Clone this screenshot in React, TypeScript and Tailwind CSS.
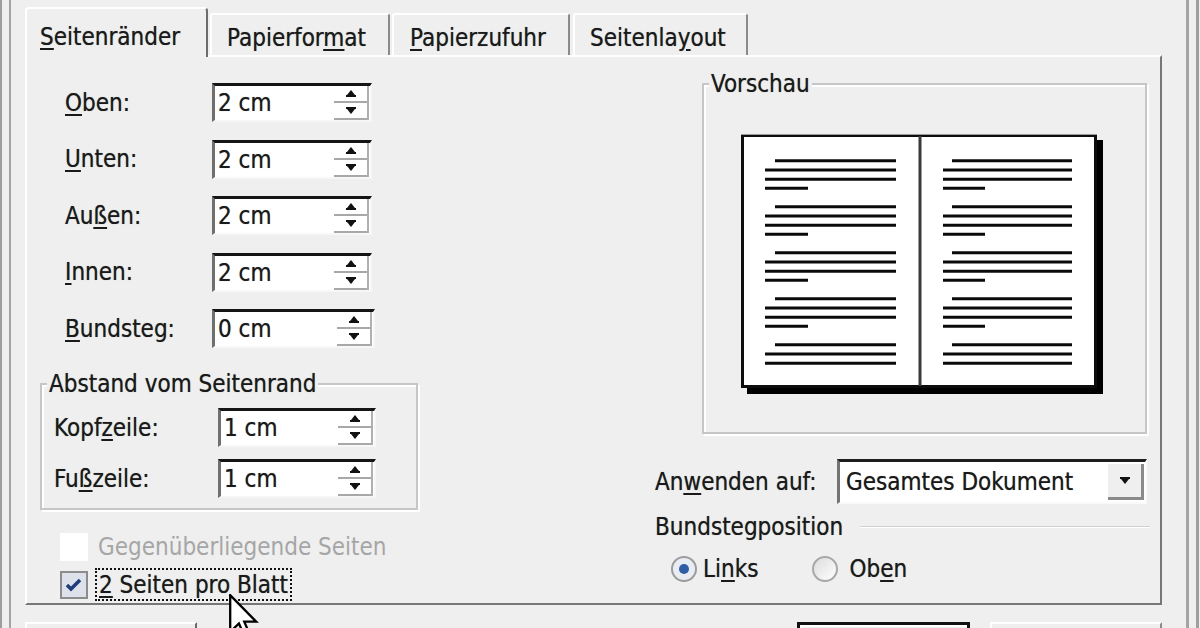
import React from "react";

const U = ({ children }: { children: React.ReactNode }) => (
  <span className="underline decoration-[2px] underline-offset-[3px]">{children}</span>
);

function Tri({ up }: { up?: boolean }) {
  return (
    <svg width="12" height="9" viewBox="0 0 12 9">
      {up ? (
        <>
          <path d="M6 1 L10 6 L2 6 Z" fill="#111" />
          <rect x="1" y="6" width="10" height="2" fill="#111" />
        </>
      ) : (
        <>
          <rect x="1" y="1" width="10" height="2" fill="#111" />
          <path d="M2 3 L10 3 L6 8 Z" fill="#111" />
        </>
      )}
    </svg>
  );
}

function Spin({ value, w }: { value: string; w: string }) {
  return (
    <div
      className={`flex h-[39px] bg-white border-t-[3px] border-t-[#151515] border-l-[3px] border-l-[#6f6f6f] border-r-[2px] border-r-[#f7f7f7] border-b-[2px] border-b-[#f7f7f7] ${w}`}
    >
      <div className="flex-1 flex items-center pl-[3px]">{value}</div>
      <div className="w-[35px] flex flex-col mr-[1px] border-r-[2px] border-r-[#b0b0b0]">
        <div className="flex-1 flex items-center justify-center border-b-[2px] border-b-[#a8a8a8]">
          <Tri up />
        </div>
        <div className="flex-1 flex items-center justify-center border-b-[2px] border-b-[#a8a8a8]">
          <Tri />
        </div>
      </div>
    </div>
  );
}

function Row({ label, value, w }: { label: React.ReactNode; value: string; w: string }) {
  return (
    <div className="flex items-center h-[39px] shrink-0">
      <div className="w-[147px]">{label}</div>
      <Spin value={value} w={w} />
    </div>
  );
}

function BookPreview() {
  const groups = [0, 1, 2, 3, 4];
  const offs = [0, 9.3, 18.6, 27.6];
  const pages = [
    { x0: 24, x1: 155, ind: 34, short: 67 },
    { x0: 202, x1: 331, ind: 211, short: 244 },
  ];
  return (
    <svg width="362" height="260" viewBox="0 0 362 260">
      <rect x="6" y="6" width="356" height="254" fill="#000" />
      <rect x="1.5" y="1.5" width="353" height="251" fill="#fff" stroke="#0d0d0d" strokeWidth="3" />
      <line x1="0" y1="0.5" x2="356" y2="0.5" stroke="#9a9a9a" strokeWidth="1" />
      <line x1="179" y1="2" x2="179" y2="252" stroke="#3a3a3a" strokeWidth="3" />
      {pages.map((p, pi) =>
        groups.map((g) =>
          offs.map((o, li) => {
            if (g === 4 && li === 3) return null;
            const y = 26.7 + 46 * g + o;
            const xs = li === 0 ? p.ind : p.x0;
            const xe = li === 3 ? p.short : p.x1;
            return (
              <line key={`${pi}-${g}-${li}`} x1={xs} y1={y} x2={xe} y2={y} stroke="#0a0a0a" strokeWidth="3" />
            );
          })
        )
      )}
    </svg>
  );
}

export default function App() {
  return (
    <div className="relative w-[1200px] h-[628px] overflow-hidden bg-[#efefef] text-[#1a1a1a] font-['DejaVu_Sans_Condensed','DejaVu_Sans',sans-serif] [font-stretch:condensed] [text-shadow:0_0_0.7px_rgba(0,0,0,0.55)] text-[24px] leading-none flex">
      {/* left window frame */}
      <div className="w-[12px] h-full flex justify-between shrink-0">
        <div className="w-[2px] bg-[#9e9e9e]" />
        <div className="w-[2px] bg-[#a4a4a4] mr-[1px]" />
      </div>

      <div className="flex flex-col pl-[13px] shrink-0">
        {/* tabs */}
        <div className="relative z-10 flex items-end h-[55px] shrink-0">
          <div className="w-[183px] h-[50px] -mb-[2px] bg-[#efefef] border-l-2 border-t-2 border-white border-r-2 border-r-[#6c6c6c] rounded-t-[4px] pl-[13px] pt-[16px]">
            <U>S</U>eitenränder
          </div>
          <div className="ml-[2px] w-[180px] h-[42px] border-l-2 border-t-2 border-white border-r-2 border-r-[#8a8a8a] rounded-t-[3px] pl-[15px] pt-[11px]">
            Papierfor<U>m</U>at
          </div>
          <div className="ml-[2px] w-[178px] h-[42px] border-l-2 border-t-2 border-white border-r-2 border-r-[#8a8a8a] rounded-t-[3px] pl-[16px] pt-[11px]">
            <U>P</U>apierzufuhr
          </div>
          <div className="ml-[3px] w-[175px] h-[42px] border-l-2 border-t-2 border-white border-r-2 border-r-[#8a8a8a] rounded-t-[3px] pl-[15px] pt-[11px]">
            Seitenla<U>y</U>out
          </div>
        </div>

        {/* panel */}
        <div className="w-[1137px] h-[550px] shrink-0 border-l-2 border-t-2 border-white border-r-2 border-b-2 border-r-[#777] border-b-[#777] flex">
          {/* left column */}
          <div className="w-[628px] pl-[13px] pt-[26px] flex flex-col">
            <div className="pl-[25px] flex flex-col gap-[17.5px] shrink-0">
              <Row label={<><U>O</U>ben:</>} value="2 cm" w="w-[160px]" />
              <Row label={<><U>U</U>nten:</>} value="2 cm" w="w-[160px]" />
              <Row label={<>Au<U>ß</U>en:</>} value="2 cm" w="w-[160px]" />
              <Row label={<><U>I</U>nnen:</>} value="2 cm" w="w-[160px]" />
              <Row label={<><U>B</U>undsteg:</>} value="0 cm" w="w-[163px]" />
            </div>

            <div className="mt-[35px] w-[378px] h-[127px] shrink-0 border-2 border-[#c6c6c6] shadow-[inset_2px_2px_0_#fff,2px_2px_0_#fff] flex flex-col">
              <span className="self-start -mt-[13px] ml-[5px] px-[2px] bg-[#efefef]">Abstand vom Seitenrand</span>
              <div className="mt-[12px] pl-[12px] flex flex-col gap-[12px]">
                <div className="flex items-center h-[39px]">
                  <div className="w-[164px]">Kopf<U>z</U>eile:</div>
                  <Spin value="1 cm" w="w-[158px]" />
                </div>
                <div className="flex items-center h-[39px]">
                  <div className="w-[164px]">Fu<U>ß</U>zeile:</div>
                  <Spin value="1 cm" w="w-[158px]" />
                </div>
              </div>
            </div>

            <div className="mt-[22px] ml-[20px] flex flex-col gap-[6px] shrink-0">
              <div className="flex items-center h-[30px]">
                <div className="w-[28px] h-[28px] bg-white" />
                <span className="ml-[10px] text-[#a6a6a6] [text-shadow:none]">Gegenüberliegende Seiten</span>
              </div>
              <div className="flex items-center h-[33px]">
                <div className="w-[28px] h-[28px] border-2 border-[#8c8c8c] bg-[#dde1ea] flex items-center justify-center">
                  <svg width="18" height="16" viewBox="0 0 18 16">
                    <path d="M2 8 L6 12 L15 3" stroke="#1f3d7a" strokeWidth="3.5" fill="none" />
                  </svg>
                </div>
                <span className="ml-[7px] h-[33px] px-[2px] flex items-center border-2 border-dotted border-[#111]">
                  <U>2</U>&nbsp;Seiten pro Blatt
                </span>
              </div>
            </div>
          </div>

          {/* right column */}
          <div className="w-[495px] pt-[26px] flex flex-col">
            <div className="ml-[47px] w-[445px] h-[351px] shrink-0 border-2 border-[#c6c6c6] shadow-[inset_2px_2px_0_#fff,2px_2px_0_#fff] flex flex-col">
              <span className="self-start -mt-[13px] ml-[5px] px-[2px] bg-[#efefef]">Vorschau</span>
              <div className="mt-[38px] ml-[37px]">
                <BookPreview />
              </div>
            </div>

            <div className="mt-[25px] flex items-center shrink-0">
              <div className="w-[182px]">An<U>w</U>enden auf:</div>
              <div className="flex h-[45px] w-[310px] bg-white border-t-[3px] border-l-[3px] border-t-[#1e1e1e] border-l-[#737373] border-r-[2px] border-b-[2px] border-r-[#fafafa] border-b-[#fafafa]">
                <div className="flex-1 flex items-center pl-[6px]">Gesamtes Dokument</div>
                <div className="w-[36px] my-[2px] mr-[1px] bg-[#efefef] border-r-[3px] border-b-[3px] border-[#8a8a8a] flex items-center justify-center">
                  <Tri />
                </div>
              </div>
            </div>

            <div className="mt-[11px] flex items-center shrink-0">
              <span>Bundstegposition</span>
              <div className="flex-1 ml-[17px] h-[2px] bg-[#d0d0d0] border-b border-white" />
            </div>

            <div className="mt-[17px] pl-[16px] flex items-center shrink-0">
              <div className="w-[26px] h-[26px] rounded-full border-2 border-[#9c9c9c] bg-[#e9ecf2] flex items-center justify-center">
                <div className="w-[10px] h-[10px] rounded-full bg-[#2f5da6]" />
              </div>
              <span className="ml-[6px]">Li<U>n</U>ks</span>
              <div className="ml-[54px] w-[26px] h-[26px] rounded-full border-2 border-[#a8a8a8] bg-gradient-to-br from-[#dcdcdc] to-white" />
              <span className="ml-[11px]">Ob<U>e</U>n</span>
            </div>
          </div>
        </div>

        {/* bottom buttons */}
        <div className="pt-[17px] flex shrink-0">
          <div className="w-[172px] h-[30px] border-t-2 border-l-2 border-white border-r-2 border-r-[#6a6a6a]" />
          <div className="ml-[600px] w-[173px] h-[30px] border-[3px] border-[#111] shadow-[inset_2px_2px_0_#fff]" />
          <div className="ml-[20px] w-[172px] h-[30px] border-t-2 border-l-2 border-white border-r-2 border-r-[#8a8a8a]" />
        </div>
      </div>

      {/* right window frame */}
      <div className="flex-1 flex justify-end">
        <div className="w-[3px] bg-[#a4a4a4] mr-[7px]" />
        <div className="w-[3px] bg-[#9e9e9e] mr-[1px]" />
      </div>

      {/* mouse pointer */}
      <svg className="absolute left-[229px] top-[594px]" width="30" height="46" viewBox="0 0 13 20">
        <path d="M0.5 0.5 L0.5 16.5 L4.3 12.8 L7 19 L9.2 18 L6.6 12 L11.8 12 Z" fill="#fff" stroke="#000" strokeWidth="1" />
      </svg>
    </div>
  );
}
